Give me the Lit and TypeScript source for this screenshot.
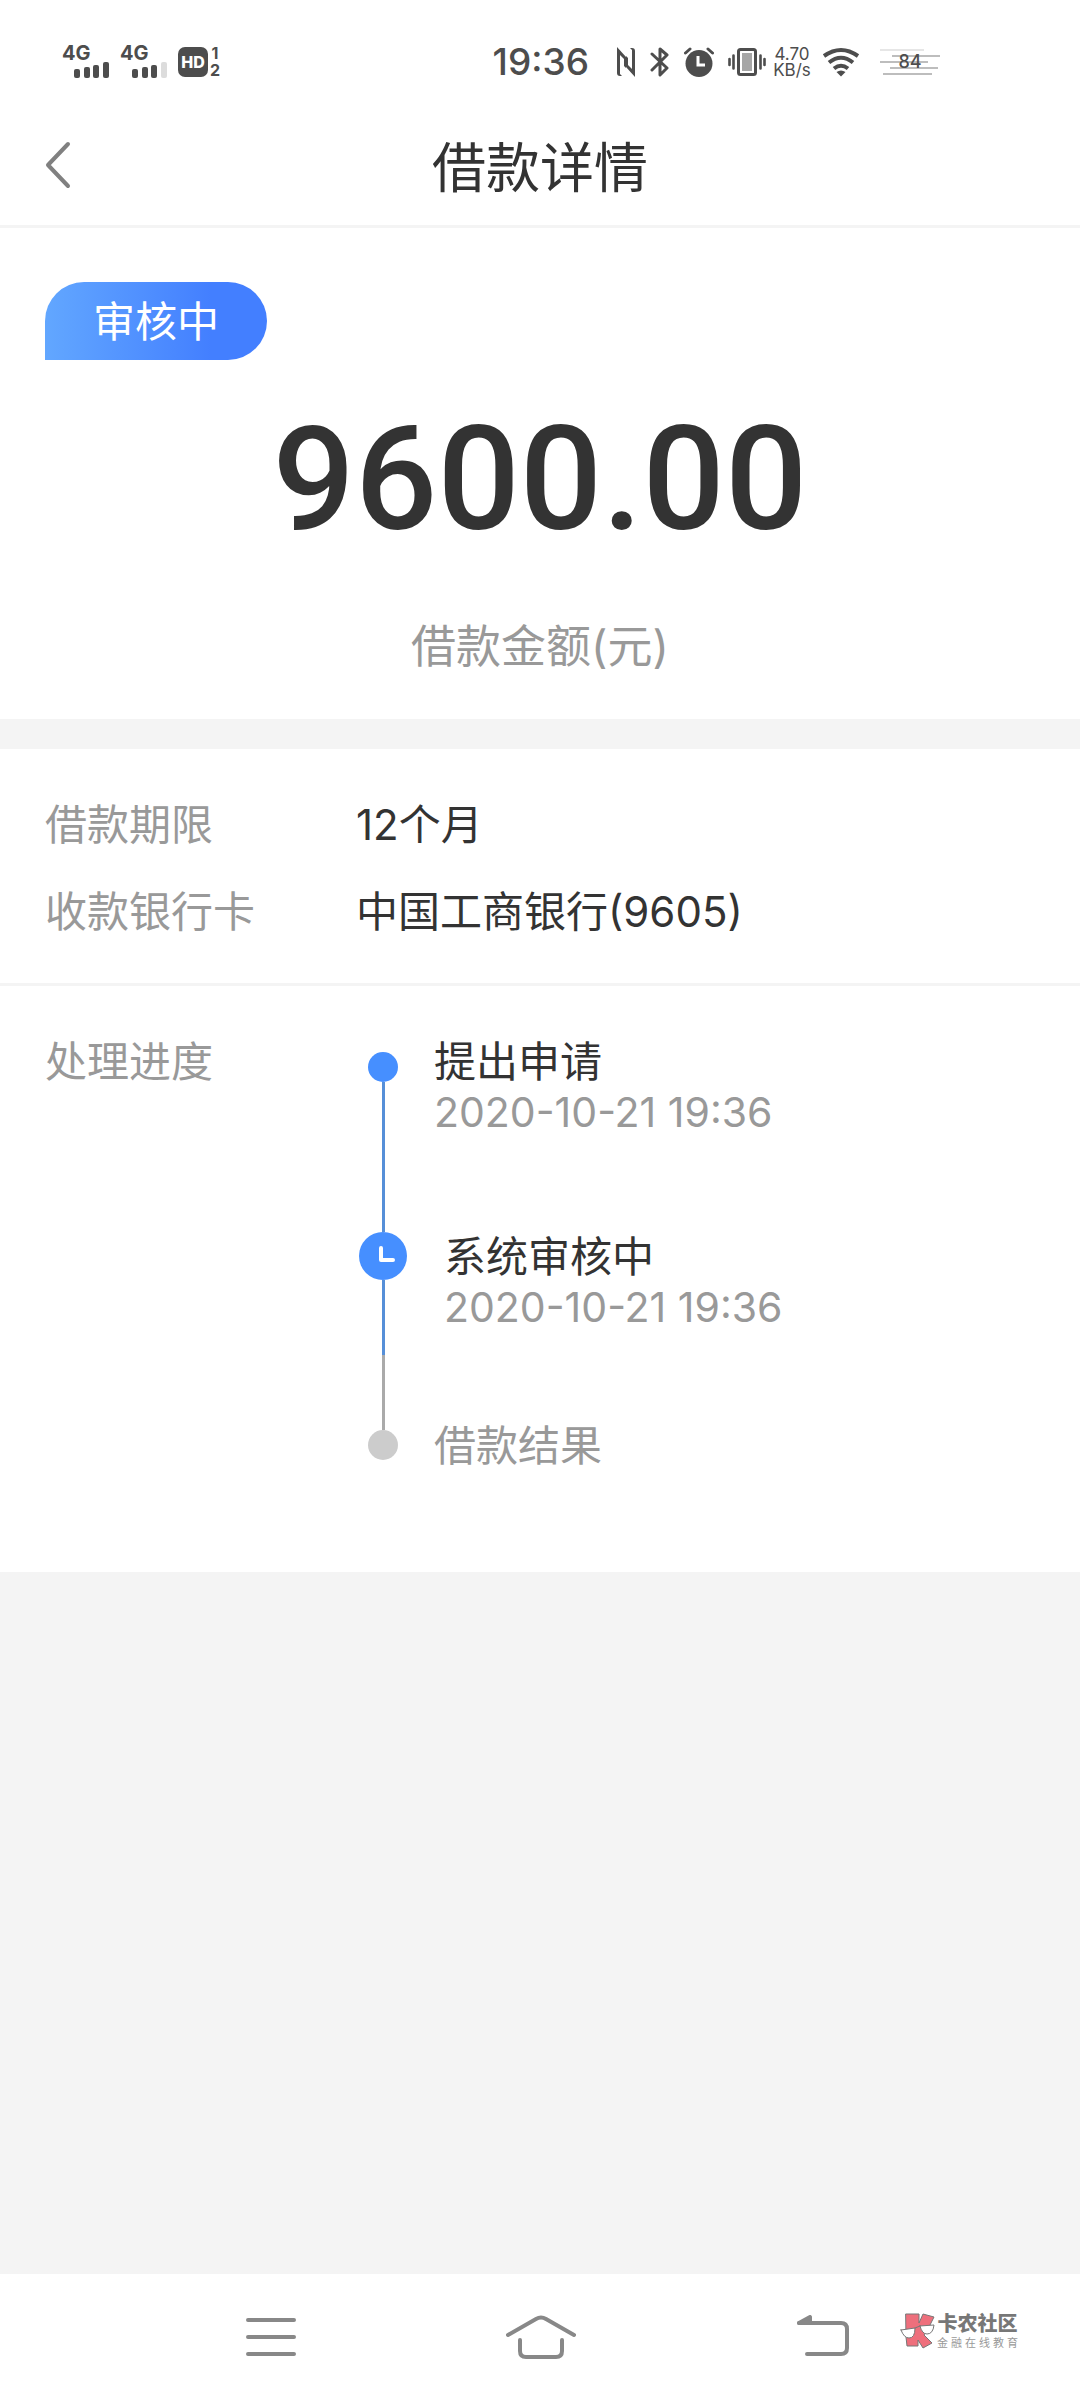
import { LitElement, html, css, svg, nothing } from "lit";
import { customElement, property } from "lit/decorators.js";
import { classMap } from "lit/directives/class-map.js";

type StepState = "done" | "active" | "pending";

interface Step {
  title: string;
  time?: string;
  state: StepState;
}

const STEPS: Step[] = [
  { title: "提出申请", time: "2020-10-21 19:36", state: "done" },
  { title: "系统审核中", time: "2020-10-21 19:36", state: "active" },
  { title: "借款结果", state: "pending" },
];

const DETAILS = [
  { label: "借款期限", value: "12个月" },
  { label: "收款银行卡", value: "中国工商银行(9605)" },
];

@customElement("status-bar")
class StatusBar extends LitElement {
  static styles = css`
    :host {
      display: flex;
      justify-content: space-between;
      align-items: center;
      height: 124px;
      padding: 0 140px 0 62px;
      color: #4d4d4d;
      font-family: Inter, "Noto Sans CJK SC", sans-serif;
    }
    svg {
      display: block;
      fill: currentColor;
    }
    .group {
      display: flex;
      align-items: center;
    }
    .signals {
      gap: 10px;
    }
    .signal {
      display: grid;
      width: 48px;
      height: 32px;
    }
    .gen {
      grid-area: 1 / 1;
      font-size: 20px;
      line-height: 14px;
      font-weight: 700;
    }
    .bars {
      grid-area: 1 / 1;
      place-self: end;
    }
    .volte {
      display: flex;
      align-items: center;
      gap: 2px;
    }
    .hd {
      width: 30px;
      height: 30px;
      border-radius: 7px;
      background: #4d4d4d;
      color: #fff;
      font-size: 16px;
      font-weight: 800;
      line-height: 30px;
      text-align: center;
    }
    .sims {
      display: flex;
      flex-direction: column;
      font-size: 16px;
      line-height: 17px;
      font-weight: 700;
      text-align: center;
    }
    .clock {
      margin-right: 27px;
      font-size: 37px;
      line-height: 40px;
      font-weight: 500;
    }
    .icons {
      gap: 14px;
      margin-right: 6px;
    }
    .speed {
      display: flex;
      flex-direction: column;
      align-items: center;
      width: 40px;
      font-size: 17px;
      line-height: 16px;
    }
    .tight {
      gap: 10px;
    }
    .battery {
      display: grid;
      place-items: center;
      margin-left: 10px;
    }
    .battery svg,
    .battery span {
      grid-area: 1 / 1;
    }
    .battery span {
      font-size: 18px;
      line-height: 28px;
      font-weight: 500;
    }
  `;

  private signal(level: number) {
    const bars = [
      { x: 0, h: 9 },
      { x: 10, h: 11 },
      { x: 19, h: 13 },
      { x: 29, h: 16 },
    ];
    return html`<div class="signal">
      <span class="gen">4G</span>
      <svg class="bars" width="36" height="17" viewBox="0 0 36 17" aria-hidden="true">
        ${bars.map(
          (b, i) => svg`<rect x=${b.x} y=${17 - b.h} width="6" height=${b.h} rx="2"
            fill=${i < level ? "#4d4d4d" : "#dcdcdc"} />`
        )}
      </svg>
    </div>`;
  }

  render() {
    return html`
      <div class="group signals">
        ${this.signal(4)} ${this.signal(3)}
        <div class="volte">
          <span class="hd">HD</span>
          <span class="sims"><span>1</span><span>2</span></span>
        </div>
      </div>
      <div class="group">
        <span class="clock">19:36</span>
        <div class="group icons">
          <svg width="20" height="30" viewBox="0 0 20 30" aria-hidden="true">
            <path d="M1 0 L10 10 V21 L8 19 V12 L4 8 V27 L6 29 H4 Q1 29 1 26 Z" />
            <path d="M19 30 L10 20 V9 L12 11 V18 L16 22 V3 L14 1 H16 Q19 1 19 4 Z" />
          </svg>
          <svg width="20" height="30" viewBox="0 0 20 30" aria-hidden="true">
            <path
              d="M2 7 L17 21 L10 28 V2 L17 8 L2 23"
              fill="none"
              stroke="currentColor"
              stroke-width="3"
              stroke-linejoin="round"
              stroke-linecap="round"
            />
          </svg>
          <svg width="30" height="30" viewBox="0 0 30 30" aria-hidden="true">
            <circle cx="15" cy="16.500" r="13.500" />
            <path
              d="M1.500 6 L6 2 M28.500 6 L24 2"
              stroke="currentColor"
              stroke-width="3"
              stroke-linecap="round"
            />
            <path d="M14 9 V18 H21" fill="none" stroke="#fff" stroke-width="3" />
          </svg>
          <svg width="38" height="30" viewBox="0 0 38 30" aria-hidden="true">
            <rect x="10.500" y="2.500" width="17" height="25" rx="2" fill="none" stroke="currentColor" stroke-width="3" />
            <rect x="14" y="6" width="10" height="18" fill="#a6a6a6" />
            <path
              d="M1.500 12 V18 M5.500 8.500 V21.500 M32.500 8.500 V21.500 M36.500 12 V18"
              stroke="currentColor"
              stroke-width="2.600"
              stroke-linecap="round"
            />
          </svg>
        </div>
        <div class="group tight">
          <span class="speed"><span>4.70</span><span>KB/s</span></span>
          <svg width="38" height="30" viewBox="0 0 38 30" aria-hidden="true">
            <g fill="none" stroke="currentColor" stroke-width="4">
              <path d="M2 9 Q19 -3 36 9" />
              <path d="M7 15.500 Q19 6 31 15.500" />
              <path d="M12 21.500 Q19 16 26 21.500" />
            </g>
            <path d="M14.500 25 Q19 22 23.500 25 L19 29.500 Z" />
          </svg>
          <div class="battery">
            <svg width="60" height="28" viewBox="0 0 60 28" aria-hidden="true">
              <path d="M0 2 H44" stroke="#e6e6e6" stroke-width="2" />
              <path
                d="M12 8 H60 M0 14 H48 M10 20 H58 M3 26 H52"
                stroke="#bdbdbd"
                stroke-width="2"
              />
            </svg>
            <span>84</span>
          </div>
        </div>
      </div>
    `;
  }
}

@customElement("progress-step")
class ProgressStep extends LitElement {
  @property({ attribute: false }) step!: Step;

  static styles = css`
    :host {
      display: grid;
      grid-template-columns: 54px 1fr;
    }
    .rail {
      display: flex;
      flex-direction: column;
      align-items: center;
    }
    .dot {
      flex: none;
      width: 30px;
      height: 30px;
      border-radius: 50%;
      background: #468fff;
    }
    .pending .dot {
      background: #ccc;
    }
    .lead {
      width: 3px;
      height: 9px;
      background: #aaa;
    }
    .done .lead {
      height: 15px;
      background: none;
    }
    .line {
      flex: 1;
      width: 3px;
      background: #568fd8;
    }
    .active .line {
      background: linear-gradient(#568fd8 75px, #aaa 75px);
    }
    .clock {
      display: block;
      flex: none;
    }
    .text {
      padding-left: 24px;
    }
    .text.done {
      padding-bottom: 95px;
    }
    .text.active {
      padding: 0 0 89px 34px;
    }
    .title {
      margin: 0;
      font-size: 42px;
      line-height: 50px;
      font-weight: 400;
      color: #333;
    }
    .pending .title,
    .time {
      color: #999;
    }
    .time {
      display: block;
      font-size: 41px;
      line-height: 50px;
    }
  `;

  render() {
    const { title, time, state } = this.step;
    const active = state === "active";
    return html`
      <div class=${classMap({ rail: true, [state]: true })}>
        ${active
          ? html`<svg class="clock" width="48" height="48" viewBox="0 0 48 48" aria-hidden="true">
              <circle cx="24" cy="24" r="24" fill="#468fff" />
              <path
                d="M22 16 V28 H34"
                fill="none"
                stroke="#fff"
                stroke-width="4"
                stroke-linecap="round"
                stroke-linejoin="round"
              />
            </svg>`
          : html`<span class="lead"></span><span class="dot"></span>`}
        ${state === "pending" ? nothing : html`<span class="line"></span>`}
      </div>
      <div class=${classMap({ text: true, [state]: true })}>
        <h2 class="title">${title}</h2>
        ${time ? html`<time class="time">${time}</time>` : nothing}
      </div>
    `;
  }
}

@customElement("system-nav")
class SystemNav extends LitElement {
  static styles = css`
    :host {
      display: grid;
      grid-template-columns: 11fr 11fr 12fr;
      position: relative;
      height: 126px;
      padding: 0 110px 0 136px;
      background: #fff;
    }
    button {
      display: grid;
      place-items: center;
      padding: 0;
      border: 0;
      background: none;
    }
    svg {
      display: block;
      fill: none;
      stroke: #888;
      stroke-width: 4;
      stroke-linecap: round;
      stroke-linejoin: round;
    }
    .brand {
      position: absolute;
      right: 62px;
      top: 38px;
      display: flex;
      align-items: center;
      gap: 2px;
      color: #777;
      font-family: "Noto Sans CJK SC", sans-serif;
    }
    .brand svg {
      stroke-width: 1;
      stroke: #777;
    }
    .names {
      display: flex;
      flex-direction: column;
      align-items: center;
    }
    .name {
      font-size: 20px;
      line-height: 22px;
      font-weight: 900;
    }
    .motto {
      display: flex;
      gap: 3px;
      font-size: 11px;
      line-height: 16px;
      color: #999;
    }
  `;

  render() {
    return html`
      <button aria-label="菜单">
        <svg width="50" height="42" viewBox="0 0 50 42">
          <path d="M2 4 H48 M2 21 H48 M2 38 H48" />
        </svg>
      </button>
      <button aria-label="主页">
        <svg width="70" height="44" viewBox="0 0 70 44">
          <path d="M2 20 L30 4 Q35 1 40 4 L68 20" />
          <path d="M14 25 V36 Q14 42 20 42 H50 Q56 42 56 36 V25" />
        </svg>
      </button>
      <button aria-label="返回">
        <svg width="52" height="44" viewBox="0 0 52 44">
          <path d="M2 8 H44 Q50 8 50 14 V33 Q50 39 44 39 H10" />
          <path d="M2 8 L13 2 V8 Z" fill="#888" />
        </svg>
      </button>
      <div class="brand">
        <svg width="35" height="36" viewBox="0 0 35 36" aria-hidden="true">
          <path
            d="M6 1 L19 1 L19 10 L23 1 L34 4 L30 12 L24 22 L32 30 L23 35 L18 27 L18 33 L7 33 L6 24 Z"
            fill="#ee6f7c"
          />
          <path d="M1 17 L15 15 Q15 25 9 25 Q4 25 1 17 Z" fill="#fff" />
          <path d="M20 13 L34 12 Q33 21 27 21 Q22 21 20 13 Z" fill="#fff" />
          <path d="M15 15 L20 13" />
        </svg>
        <div class="names">
          <span class="name">卡农社区</span>
          <span class="motto">${[..."金融在线教育"].map((c) => html`<span>${c}</span>`)}</span>
        </div>
      </div>
    `;
  }
}

@customElement("app-root")
class AppRoot extends LitElement {
  static styles = css`
    :host {
      display: flex;
      flex-direction: column;
      min-height: 100vh;
      background: #f4f4f4;
      color: #333;
      font-family: Inter, "Noto Sans CJK SC", sans-serif;
    }
    .top,
    .panel {
      background: #fff;
    }
    .bar {
      display: grid;
      grid-template-columns: 80px 1fr 80px;
      align-items: center;
      height: 89px;
      padding: 0 36px 12px;
      border-bottom: 3px solid #f4f4f4;
    }
    .back {
      display: flex;
      align-items: center;
      height: 80px;
      padding: 0 0 8px 8px;
      border: 0;
      background: none;
    }
    .heading {
      margin: 0;
      font-size: 54px;
      line-height: 88px;
      font-weight: 400;
      text-align: center;
    }
    .summary {
      display: flex;
      flex-direction: column;
      align-items: center;
      padding: 54px 45px 42px;
      margin-bottom: 30px;
    }
    .badge {
      align-self: flex-start;
      padding: 2px 48px 0;
      border-radius: 40px 40px 40px 0;
      background: linear-gradient(90deg, #62a7ff, #437fff 75%);
      color: #fff;
      font-size: 42px;
      line-height: 76px;
    }
    .amount {
      margin: 34px 0 53px;
      font-family: Roboto, sans-serif;
      font-size: 145px;
      line-height: 170px;
      font-weight: 500;
    }
    .caption {
      margin: 0;
      color: #999;
      font-size: 45px;
      line-height: 60px;
    }
    .terms {
      margin: 0;
      padding: 32px 45px 28px;
      border-bottom: 3px solid #f4f4f4;
    }
    .row {
      display: grid;
      grid-template-columns: 311px 1fr;
      font-size: 42px;
      line-height: 87px;
    }
    .label {
      margin: 0;
      color: #999;
      font-size: 42px;
      font-weight: 400;
    }
    .value {
      margin: 0;
    }
    .progress {
      padding: 51px 45px 101px;
      line-height: 50px;
    }
    .steps {
      margin: 0;
      padding: 0;
      list-style: none;
    }
    .fill {
      flex: 1;
    }
  `;

  render() {
    return html`
      <header class="top">
        <status-bar></status-bar>
        <div class="bar">
          <button class="back" aria-label="返回">
            <svg width="28" height="48" viewBox="0 0 28 48">
              <path
                d="M24 3 L4 24 L24 45"
                fill="none"
                stroke="#808080"
                stroke-width="4"
                stroke-linecap="round"
                stroke-linejoin="round"
              />
            </svg>
          </button>
          <h1 class="heading">借款详情</h1>
        </div>
      </header>
      <section class="panel summary">
        <span class="badge">审核中</span>
        <strong class="amount">9600.00</strong>
        <p class="caption">借款金额(元)</p>
      </section>
      <dl class="panel terms">
        ${DETAILS.map(
          (d) => html`<div class="row">
            <dt class="label">${d.label}</dt>
            <dd class="value">${d.value}</dd>
          </div>`
        )}
      </dl>
      <section class="panel row progress">
        <h2 class="label">处理进度</h2>
        <ol class="steps">
          ${STEPS.map((s) => html`<li><progress-step .step=${s}></progress-step></li>`)}
        </ol>
      </section>
      <div class="fill"></div>
      <system-nav></system-nav>
    `;
  }
}
